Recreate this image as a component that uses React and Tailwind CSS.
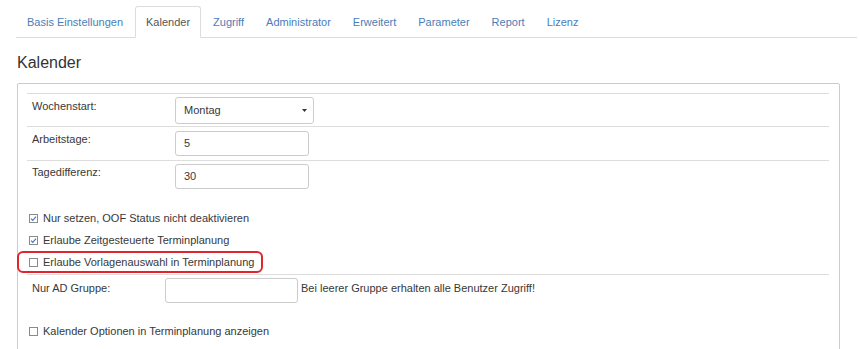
import React from "react";

const tabs = [
  "Basis Einstellungen",
  "Kalender",
  "Zugriff",
  "Administrator",
  "Erweitert",
  "Parameter",
  "Report",
  "Lizenz",
];

const Check = ({ checked }) => (
  <span className="w-[9px] h-[9px] border border-[#8a8a8a] bg-white flex items-center justify-center shrink-0">
    {checked && (
      <svg width="7" height="7" viewBox="0 0 7 7">
        <path d="M1 3.6 L2.8 5.3 L6 1.6" fill="none" stroke="#4a78c2" strokeWidth="1.2" />
      </svg>
    )}
  </span>
);

const CheckRow = ({ checked, label, marked }) => (
  <div className="relative h-[22px] flex items-center pl-[2px] gap-[5px]">
    <Check checked={checked} />
    <span className="leading-[14px]">{label}</span>
    {marked && (
      <span className="absolute -left-[10px] top-0 w-[246px] h-[22px] border-2 border-[#e0262c] rounded-[6px]" />
    )}
  </div>
);

const App = () => {
  return (
    <div className="w-[859px] h-[349px] overflow-hidden bg-white text-[11px] text-[#383838] font-['Liberation_Sans',Arial,sans-serif]">
      <div className="pl-4 pr-[2px] pt-[6px]">
        <ul className="flex border-b border-[#ddd]">
          {tabs.map((t) => {
            const active = t === "Kalender";
            return (
              <li key={t} className={active ? "mx-px -mb-px" : "-mb-px"}>
                <span
                  className={
                    active
                      ? "block h-[32px] px-[10px] leading-[30px] border border-[#ddd] border-b-white rounded-t-[3px] bg-white text-[#555]"
                      : "block h-[32px] px-[10px] leading-[30px] border border-transparent text-[#4a7db9]"
                  }
                >
                  {t}
                </span>
              </li>
            );
          })}
        </ul>
      </div>

      <div className="ml-[17px] mt-[15px] text-[16px] leading-[20px] text-[#333]">Kalender</div>

      <div className="ml-[17px] mt-[10px] w-[823px] h-[300px] border border-[#ccc] rounded-[2px] pt-[9px] pl-[9px] pr-[10px]">
        <div className="border-t border-[#ddd] h-[33px] flex">
          <div className="w-[148px] pl-[5px] pt-[5px] leading-[14px]">Wochenstart:</div>
          <div className="mt-[3px] w-[139px] h-[27px] border border-[#ccc] rounded-[3px] flex items-center justify-between pl-[8px] pr-[6px]">
            <span>Montag</span>
            <svg width="5" height="3" viewBox="0 0 5 3">
              <polygon points="0,0 5,0 2.5,3" fill="#333" />
            </svg>
          </div>
        </div>
        <div className="border-t border-[#ddd] h-[34px] flex">
          <div className="w-[148px] pl-[5px] pt-[5px] leading-[14px]">Arbeitstage:</div>
          <div className="mt-[4px] w-[134px] h-[25px] border border-[#ccc] rounded-[3px] flex items-center pl-[8px]">5</div>
        </div>
        <div className="border-t border-[#ddd] h-[47px] flex">
          <div className="w-[148px] pl-[5px] pt-[4px] leading-[14px]">Tagedifferenz:</div>
          <div className="mt-[3px] w-[134px] h-[25px] border border-[#ccc] rounded-[3px] flex items-center pl-[8px]">30</div>
        </div>

        <CheckRow checked label="Nur setzen, OOF Status nicht deaktivieren" />
        <CheckRow checked label="Erlaube Zeitgesteuerte Terminplanung" />
        <CheckRow label="Erlaube Vorlagenauswahl in Terminplanung" marked />

        <div className="mt-px border-t border-[#ddd] h-[46px] flex">
          <div className="w-[138px] pl-[5px] pt-[6px] leading-[14px]">Nur AD Gruppe:</div>
          <div className="mt-[3px] w-[133px] h-[25px] border border-[#ccc] rounded-[3px]" />
          <div className="ml-[3px] pt-[6px] leading-[14px]">Bei leerer Gruppe erhalten alle Benutzer Zugriff!</div>
        </div>

        <CheckRow label="Kalender Optionen in Terminplanung anzeigen" />
      </div>
    </div>
  );
};

export default App;
